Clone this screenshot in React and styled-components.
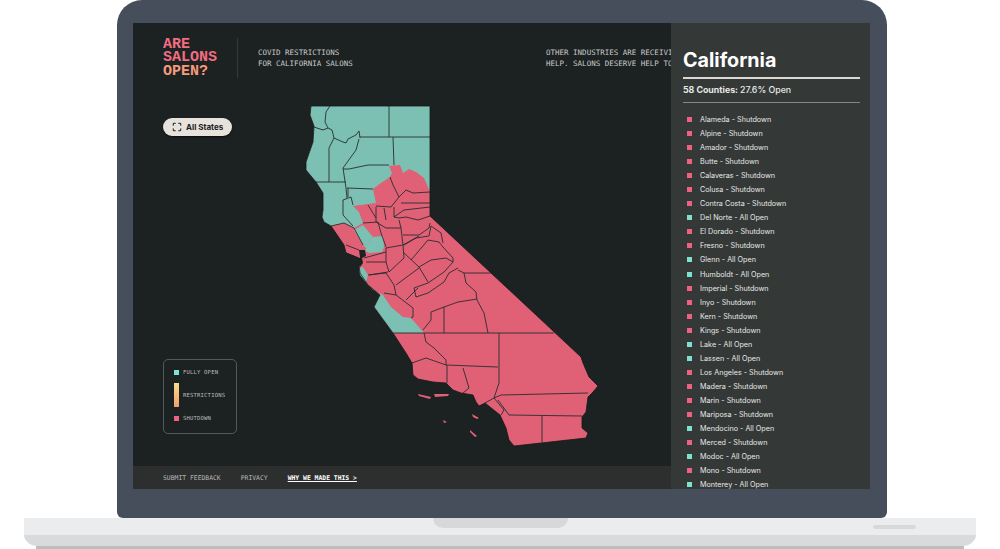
import styled, { createGlobalStyle } from 'styled-components'
import { Maximize } from 'lucide-react'

const COUNTIES = [
  ['Alameda', false], ['Alpine', false], ['Amador', false], ['Butte', false],
  ['Calaveras', false], ['Colusa', false], ['Contra Costa', false], ['Del Norte', true],
  ['El Dorado', false], ['Fresno', false], ['Glenn', true], ['Humboldt', true],
  ['Imperial', false], ['Inyo', false], ['Kern', false], ['Kings', false],
  ['Lake', true], ['Lassen', true], ['Los Angeles', false], ['Madera', false],
  ['Marin', false], ['Mariposa', false], ['Mendocino', true], ['Merced', false],
  ['Modoc', true], ['Mono', false], ['Monterey', true],
]

const NORTH_COAST = '330,226 323,222 321,217 322,210 322,193 315,182 305,170 305,162 312,142 313,126 309,115 310,106'

const STATE_OUTLINE = `310,106 429,106 429,216 580,357 582,363 588,377 597,386 592,392 587,397 585,412 581,417 581,428 587,433 585,438 513,446 508,440 505,428 499,415 484,403 478,406 475,402 472,395 460,393 452,390 445,383 432,382 417,379 412,375 411,363 405,353 392,333 373,307 379,295 367,285 359,273 358,265 361,262 358,258 345,253 343,245 ${NORTH_COAST}`

const OPEN_AREAS = [
  `310,106 429,106 429,192 427,187 423,178 415,172 408,169 402,173 399,165 388,166 391,173 389,177 380,183 372,189 375,203 367,204 352,206 358,212 362,223 353,228 343,223 ${NORTH_COAST}`,
  '353,230 362,225 372,237 368,242 367,250 362,245',
  '372,237 382,236 383,247 381,252 368,253 364,251 368,242',
  '358,268 362,267 367,275 365,282 372,290 382,295 390,307 402,317 410,318 423,333 392,333 373,307 379,295 367,285 359,275',
]

const ISLANDS = [
  '417,394 430,397 429,399 418,396',
  '433,394 448,394 447,396 434,397',
  '471,414 478,418 476,419 472,417',
  '442,420 446,422 443,423',
  '469,430 476,436 474,437 469,432',
]

const BAY = '358,250 364,250 365,256 361,258 362,263 359,267 357,262 359,257'

const COUNTY_LINES = [
  '329,106 325,112 324,122 327,128 322,130 313,127',
  '327,128 331,130 333,138 342,142 345,143 347,139 355,135 358,131 359,138',
  '359,137 429,137',
  '388,106 388,137',
  '392,137 393,165',
  '333,138 328,148 328,182',
  '358,139 355,150 342,168 345,188 346,198',
  '342,169 348,169 367,165 388,165',
  '315,182 345,182',
  '346,188 372,189',
  '347,188 347,197',
  '342,200 350,197 352,205',
  '342,200 342,215 352,226',
  '389,177 392,185 398,197',
  '398,197 405,190 412,193 429,192',
  '398,197 390,207 375,206',
  '400,203 429,203',
  '393,217 403,210 429,207',
  '383,208 385,220',
  '393,207 393,217 398,218',
  '398,218 405,217 417,220 429,216',
  '375,207 375,222 385,228',
  '367,205 375,218',
  '362,223 377,222 380,233 385,247',
  '385,228 400,228 402,245 385,248',
  '400,228 398,220',
  '402,235 418,235 428,228 429,223',
  '402,245 418,236',
  '385,248 385,262 388,272',
  '402,245 403,258 388,272',
  '403,253 418,267 427,282',
  '403,245 415,238 428,236 430,226 440,233 442,243',
  '410,260 427,240 438,242 442,247 452,258 452,262',
  '418,267 430,260 445,258 452,262 443,272 427,283',
  '427,283 413,288 415,297 427,293 443,282 448,273 457,268',
  '463,273 490,273',
  '457,270 463,273 465,283 475,292 476,300',
  '476,299 457,302 443,307 430,312 430,320 422,330',
  '443,307 443,333',
  '476,300 483,313 487,333',
  '392,333 553,333',
  '498,333 498,383 493,398',
  '423,333 425,342 433,348 445,360 445,365 497,367',
  '411,363 425,358 445,365',
  '446,365 446,383',
  '462,368 468,388 462,393',
  '493,398 500,395 587,393',
  '484,403 493,398 503,410 500,415',
  '497,400 508,415 581,416',
  '541,416 541,442',
  '383,293 395,295 412,308 412,317 410,318',
  '367,275 385,273 393,285 395,295',
  '395,285 418,268',
  '405,300 417,288',
  '363,258 385,252',
  '365,262 385,262',
  '368,275 387,272',
  '343,252 357,258',
  '345,245 358,250',
  '330,226 343,223 353,228 362,245',
]

const GlobalStyle = createGlobalStyle`
  html, body {
    margin: 0;
    background: #fff;
  }
`

const CaliforniaMap = () => (
  <MapSvg viewBox="300 100 300 350">
    <polygon points={STATE_OUTLINE} fill="#e06076" />
    {OPEN_AREAS.map((points) => (
      <polygon key={points} points={points} fill="#7bc0b2" />
    ))}
    {ISLANDS.map((points) => (
      <polygon key={points} points={points} fill="#e06076" />
    ))}
    <polygon points={BAY} fill="#1c2122" />
    {COUNTY_LINES.map((points) => (
      <polyline key={points} points={points} fill="none" stroke="#2a2c30" strokeWidth="0.9" />
    ))}
    <polygon points={STATE_OUTLINE} fill="none" stroke="#15191a" strokeWidth="0.8" />
  </MapSvg>
)

const App = () => {
  return (
    <>
      <GlobalStyle />
      <Page>
        <Bezel>
          <Screen>
            <Main>
              <Header>
                <Logo>
                  ARE<br />SALONS<br /><OpenWord>OPEN?</OpenWord>
                </Logo>
                <Tagline>COVID RESTRICTIONS<br />FOR CALIFORNIA SALONS</Tagline>
                <Notice>OTHER INDUSTRIES ARE RECEIVING<br />HELP. SALONS DESERVE HELP TOO.</Notice>
              </Header>

              <Stage>
                <SideColumn>
                  <AllStates>
                    <Maximize size={10} strokeWidth={2.5} />
                    All States
                  </AllStates>
                  <Legend>
                    <LegendRow><Swatch $color="#7de3d0" />FULLY OPEN</LegendRow>
                    <LegendRow><Swatch $color="linear-gradient(#f7dc8e, #f2a06c)" $tall />RESTRICTIONS</LegendRow>
                    <LegendRow><Swatch $color="#f0617f" />SHUTDOWN</LegendRow>
                  </Legend>
                </SideColumn>
                <CaliforniaMap />
              </Stage>

              <Footer>
                <FooterLink>SUBMIT FEEDBACK</FooterLink>
                <FooterLink>PRIVACY</FooterLink>
                <FooterLink $strong>WHY WE MADE THIS &gt;</FooterLink>
              </Footer>
            </Main>

            <Panel>
              <StateName>California</StateName>
              <Summary>58 Counties: <span>27.6% Open</span></Summary>
              <CountyList>
                {COUNTIES.map(([name, open]) => (
                  <County key={name}>
                    <CountyDot $open={open} />
                    {name} - {open ? 'All Open' : 'Shutdown'}
                  </County>
                ))}
              </CountyList>
            </Panel>
          </Screen>
        </Bezel>
        <BaseTop>
          <Notch />
          <Vent />
        </BaseTop>
        <BaseBottom />
        <BaseShadow />
      </Page>
    </>
  )
}

export default App

const Page = styled.div`
  width: 1000px;
  height: 549px;
  overflow: hidden;
  background: #fff;
`

const Bezel = styled.div`
  width: 770px;
  height: 518px;
  box-sizing: border-box;
  margin: 0 0 0 117px;
  padding: 23px 17px 29px 16px;
  background: #464e5b;
  border-radius: 25px 25px 6px 6px;
`

const Screen = styled.div`
  display: grid;
  grid-template-columns: 538px 199px;
  height: 466px;
  overflow: hidden;
`

const Main = styled.div`
  display: flex;
  flex-direction: column;
  min-width: 0;
  height: 466px;
  background: #1c2122;
`

const Header = styled.header`
  display: flex;
  align-items: center;
  height: 40px;
  padding: 15px 0 0 30px;
  overflow: hidden;
  flex: none;
  font-family: "DejaVu Sans Mono", monospace;
`

const Logo = styled.div`
  width: 74px;
  height: 40px;
  flex: none;
  border-right: 1px solid #35393a;
  font-family: "Liberation Mono", monospace;
  font-size: 15px;
  font-weight: 700;
  line-height: 13.33px;
  color: #f26d80;
`

const OpenWord = styled.span`
  color: #f79a7b;
`

const Tagline = styled.div`
  width: 288px;
  flex: none;
  margin-left: 20px;
  font-size: 7.5px;
  line-height: 11px;
  color: #c8c9c8;
`

const Notice = styled(Tagline)`
  margin-left: 0;
  white-space: nowrap;
`

const Stage = styled.div`
  display: flex;
  flex: 1;
  min-height: 0;
  padding-left: 30px;
`

const SideColumn = styled.div`
  display: flex;
  flex-direction: column;
  align-items: flex-start;
  justify-content: space-between;
  width: 75px;
  flex: none;
  padding: 40px 0 32px;
`

const AllStates = styled.button`
  all: unset;
  display: flex;
  align-items: center;
  gap: 4px;
  box-sizing: border-box;
  width: 69px;
  height: 18px;
  padding-left: 9px;
  border-radius: 9px;
  background: #e8e2dc;
  box-shadow: 0 1px 2px rgba(0, 0, 0, 0.6);
  font-family: Inter, sans-serif;
  font-size: 8px;
  font-weight: 700;
  color: #1c2122;
`

const Legend = styled.div`
  display: flex;
  flex-direction: column;
  justify-content: space-between;
  box-sizing: border-box;
  width: 74px;
  height: 75px;
  padding: 9px 0 12px 10px;
  border: 1px solid #55595a;
  border-radius: 5px;
  font-family: "DejaVu Sans Mono", monospace;
  font-size: 5.6px;
  letter-spacing: 0.15px;
  color: #b9bbba;
`

const LegendRow = styled.div`
  display: flex;
  align-items: center;
  gap: 4px;
`

const Swatch = styled.span`
  width: 5px;
  height: ${(props) => (props.$tall ? '24px' : '5px')};
  background: ${(props) => props.$color};
`

const MapSvg = styled.svg`
  display: block;
  width: 300px;
  height: 350px;
  flex: none;
  margin: 22px 0 0 63px;
`

const Footer = styled.footer`
  display: flex;
  align-items: center;
  gap: 20px;
  height: 23px;
  flex: none;
  padding-left: 30px;
  background: #2d2f2f;
  font-family: "DejaVu Sans Mono", monospace;
  font-size: 6.4px;
`

const FooterLink = styled.a`
  color: ${(props) => (props.$strong ? '#fff' : '#b4b6b5')};
  font-weight: ${(props) => (props.$strong ? 700 : 400)};
  text-decoration: ${(props) => (props.$strong ? 'underline' : 'none')};
`

const Panel = styled.aside`
  box-sizing: border-box;
  padding: 23px 10px 0 12px;
  overflow: hidden;
  background: #343837;
  font-family: Inter, sans-serif;
  color: #e8e8e6;
`

const StateName = styled.h1`
  margin: 0;
  height: 31px;
  border-bottom: 2px solid #d9d8d4;
  font-size: 19.7px;
  font-weight: 700;
  line-height: 28px;
  color: #fff;
`

const Summary = styled.div`
  height: 23px;
  border-bottom: 1px solid #858786;
  font-size: 8.8px;
  font-weight: 700;
  line-height: 22px;

  span {
    font-weight: 500;
  }
`

const CountyList = styled.ul`
  margin: 0;
  padding: 9.5px 0 0 4px;
  list-style: none;
`

const County = styled.li`
  display: flex;
  align-items: center;
  gap: 8px;
  height: 14.06px;
  font-size: 7.2px;
  white-space: nowrap;
`

const CountyDot = styled.span`
  width: 5px;
  height: 5px;
  flex: none;
  background: ${(props) => (props.$open ? '#7de3d0' : '#f0617f')};
`

const BaseTop = styled.div`
  display: flex;
  justify-content: center;
  position: relative;
  width: 952px;
  height: 17px;
  margin-left: 24px;
  background: #ebecee;
`

const Notch = styled.div`
  width: 135px;
  height: 10px;
  background: #d7d8da;
  border-radius: 0 0 10px 10px;
`

const Vent = styled.div`
  position: absolute;
  top: 7px;
  right: 60px;
  width: 43px;
  height: 4px;
  border-radius: 2px;
  background: #d7d8da;
`

const BaseBottom = styled.div`
  width: 952px;
  height: 11px;
  margin-left: 24px;
  background: #d9dadc;
  border-radius: 0 0 14px 14px / 0 0 11px 11px;
`

const BaseShadow = styled.div`
  width: 928px;
  height: 3px;
  margin-left: 36px;
  background: #bdbdbd;
`
